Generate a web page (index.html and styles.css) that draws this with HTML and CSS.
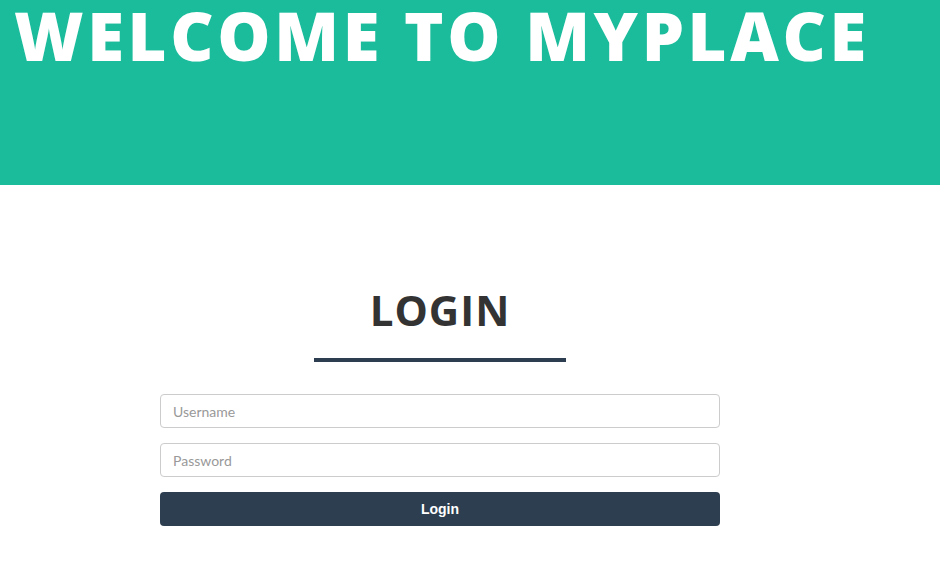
FILE: index.html
```html
<!DOCTYPE html>
<html lang="en">
<head>
    <meta charset="UTF-8">
    <meta name="viewport" content="width=device-width, initial-scale=1.0">
    <title>MyPlace - Login</title>
    <link rel="stylesheet" href="styles.css">
</head>
<body>
    <header class="banner">
        <h1 class="banner-title">WELCOME TO MYPLACE</h1>
    </header>

    <main class="login">
        <h2 class="login-title">LOGIN</h2>
        <div class="login-rule"></div>
        <form class="login-form" action="#" method="post">
            <input type="text" name="username" placeholder="Username">
            <input type="password" name="password" placeholder="Password">
            <button type="submit">Login</button>
        </form>
    </main>
</body>
</html>
```

FILE: styles.css
```css
body {
    margin: 0;
    padding: 0;
    background-color: #fff;
    font-family: Lato, "Open Sans", sans-serif;
}
.banner {
    height: 185px;
    background-color: #1abc9c;
}
.banner-title {
    margin: 0;
    padding: 0 0 0 14px;
    font-family: "Open Sans", sans-serif;
    font-weight: 800;
    font-size: 67px;
    line-height: 70px;
    letter-spacing: 3.6px;
    color: #fff;
}
.login {
    width: 560px;
    margin-left: 160px;
    padding-top: 95px;
    display: flex;
    flex-direction: column;
    align-items: center;
}
.login-title {
    margin: 0;
    font-family: "Open Sans", sans-serif;
    font-weight: 700;
    font-size: 42px;
    line-height: 60px;
    letter-spacing: 1px;
    color: #333;
}
.login-rule {
    width: 252px;
    height: 4px;
    margin-top: 18px;
    background-color: #2c3e50;
}
.login-form {
    width: 100%;
    margin-top: 32px;
    display: flex;
    flex-direction: column;
    gap: 15px;
}
.login-form input {
    height: 34px;
    padding: 0 12px;
    border: 1px solid #ccc;
    border-radius: 4px;
    box-sizing: border-box;
    font-family: Lato, sans-serif;
    font-size: 14px;
    color: #555;
}
.login-form input::placeholder {
    color: #999;
}
.login-form button {
    height: 34px;
    border: none;
    border-radius: 4px;
    background-color: #2c3e50;
    color: #fff;
    font-family: "Liberation Sans", Arial, sans-serif;
    font-weight: bold;
    font-size: 14px;
    cursor: pointer;
}
```
